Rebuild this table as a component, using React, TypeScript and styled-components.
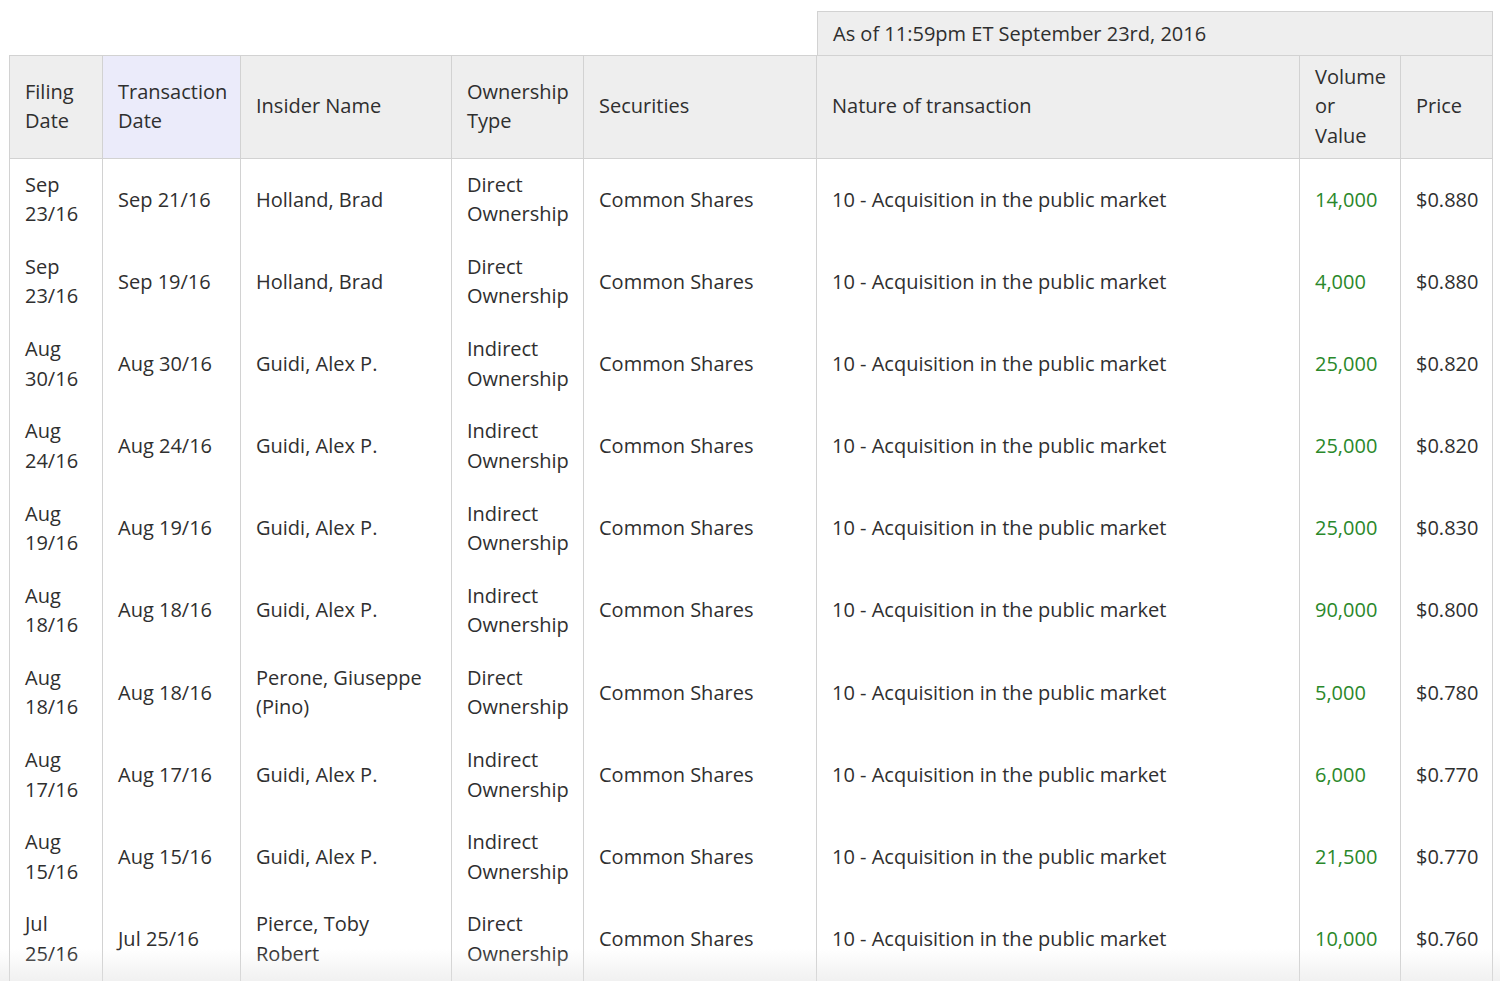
import React from "react";
import styled, { createGlobalStyle } from "styled-components";

const Global = createGlobalStyle`
  html, body { margin: 0; padding: 0; background: #fff; }
  body { font-family: "Open Sans", "Noto Sans", sans-serif; color: #333; overflow: hidden; }
`;

const Page = styled.div`
  padding: 11px 7px 0 9px;
`;

const AsOfRow = styled.div`
  display: flex;
  justify-content: flex-end;
`;

const AsOf = styled.div`
  width: 676px;
  height: 44px;
  box-sizing: border-box;
  background: #eeeeee;
  border: 1px solid #d2d2d2;
  border-bottom: none;
  padding: 0 15px;
  display: flex;
  align-items: center;
  font-size: 20px;
  color: #2f2f2f;
`;

const Table = styled.table`
  width: 1484px;
  border-collapse: collapse;
  table-layout: fixed;
  font-size: 20px;
  line-height: 29.5px;
  border: 1px solid #d2d2d2;
  color: #2f2f2f;
`;

const Th = styled.th<{ $hl?: boolean }>`
  text-align: left;
  font-weight: 400;
  background: ${(p) => (p.$hl ? "#ebebfa" : "#eeeeee")};
  padding: 5px 15px 7px;
  height: 90px;
  border: 1px solid #d2d2d2;
  vertical-align: middle;
`;

const Td = styled.td<{ $green?: boolean }>`
  padding: 10.8px 15px 12.4px;
  border-left: 1px solid #d2d2d2;
  border-right: 1px solid #d2d2d2;
  vertical-align: middle;
  height: 59px;
  color: ${(p) => (p.$green ? "#2a882a" : "#2f2f2f")};
`;

const Fade = styled.div`
  position: fixed;
  left: 0;
  right: 0;
  bottom: 0;
  height: 32px;
  pointer-events: none;
  background: linear-gradient(to bottom, rgba(230, 230, 230, 0), rgba(226, 226, 226, 0.5));
`;

const widths = [93, 138, 211, 132, 233, 483, 101, 92];

type Row = [string, string, string, string, string, string];

const rows: Row[] = [
  ["Sep 23/16", "Sep 21/16", "Holland, Brad", "Direct Ownership", "14,000", "$0.880"],
  ["Sep 23/16", "Sep 19/16", "Holland, Brad", "Direct Ownership", "4,000", "$0.880"],
  ["Aug 30/16", "Aug 30/16", "Guidi, Alex P.", "Indirect Ownership", "25,000", "$0.820"],
  ["Aug 24/16", "Aug 24/16", "Guidi, Alex P.", "Indirect Ownership", "25,000", "$0.820"],
  ["Aug 19/16", "Aug 19/16", "Guidi, Alex P.", "Indirect Ownership", "25,000", "$0.830"],
  ["Aug 18/16", "Aug 18/16", "Guidi, Alex P.", "Indirect Ownership", "90,000", "$0.800"],
  ["Aug 18/16", "Aug 18/16", "Perone, Giuseppe (Pino)", "Direct Ownership", "5,000", "$0.780"],
  ["Aug 17/16", "Aug 17/16", "Guidi, Alex P.", "Indirect Ownership", "6,000", "$0.770"],
  ["Aug 15/16", "Aug 15/16", "Guidi, Alex P.", "Indirect Ownership", "21,500", "$0.770"],
  ["Jul 25/16", "Jul 25/16", "Pierce, Toby Robert", "Direct Ownership", "10,000", "$0.760"],
];

export default function App() {
  return (
    <Page>
      <Global />
      <AsOfRow>
        <AsOf>As of 11:59pm ET September 23rd, 2016</AsOf>
      </AsOfRow>
      <Table>
        <colgroup>
          {widths.map((w, i) => (
            <col key={i} style={{ width: w }} />
          ))}
        </colgroup>
        <thead>
          <tr>
            <Th>Filing Date</Th>
            <Th $hl>Transaction Date</Th>
            <Th>Insider Name</Th>
            <Th>Ownership Type</Th>
            <Th>Securities</Th>
            <Th>Nature of transaction</Th>
            <Th>Volume or Value</Th>
            <Th>Price</Th>
          </tr>
        </thead>
        <tbody>
          {rows.map((r, i) => (
            <tr key={i}>
              <Td>{r[0]}</Td>
              <Td>{r[1]}</Td>
              <Td>{r[2]}</Td>
              <Td>{r[3]}</Td>
              <Td>Common Shares</Td>
              <Td>10 - Acquisition in the public market</Td>
              <Td $green>{r[4]}</Td>
              <Td>{r[5]}</Td>
            </tr>
          ))}
        </tbody>
      </Table>
      <Fade />
    </Page>
  );
}
